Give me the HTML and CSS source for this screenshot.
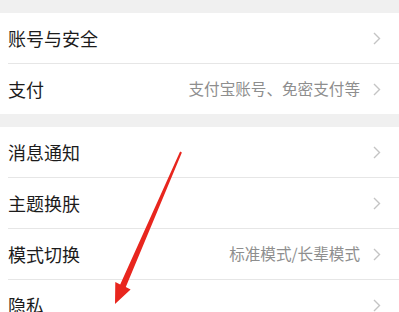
FILE: index.html
```html
<!DOCTYPE html>
<html lang="zh-CN">
<head>
  <meta charset="UTF-8">
  <title>设置</title>
  <link rel="stylesheet" href="styles.css">
</head>
<body>
  <div class="page">
    <div class="gap gap-top"></div>
    <div class="group">
      <div class="row">
        <span class="title">账号与安全</span>
        <span class="chevron"><svg width="8" height="13" viewBox="0 0 8 13"><path d="M1 1l5.5 5.5L1 12" fill="none" stroke="#c4c4c4" stroke-width="1.4"/></svg></span>
      </div>
      <div class="row">
        <span class="title">支付</span>
        <span class="sub">支付宝账号、免密支付等</span>
        <span class="chevron"><svg width="8" height="13" viewBox="0 0 8 13"><path d="M1 1l5.5 5.5L1 12" fill="none" stroke="#c4c4c4" stroke-width="1.4"/></svg></span>
      </div>
    </div>
    <div class="gap"></div>
    <div class="group">
      <div class="row">
        <span class="title">消息通知</span>
        <span class="chevron"><svg width="8" height="13" viewBox="0 0 8 13"><path d="M1 1l5.5 5.5L1 12" fill="none" stroke="#c4c4c4" stroke-width="1.4"/></svg></span>
      </div>
      <div class="row">
        <span class="title">主题换肤</span>
        <span class="chevron"><svg width="8" height="13" viewBox="0 0 8 13"><path d="M1 1l5.5 5.5L1 12" fill="none" stroke="#c4c4c4" stroke-width="1.4"/></svg></span>
      </div>
      <div class="row">
        <span class="title">模式切换</span>
        <span class="sub">标准模式/长辈模式</span>
        <span class="chevron"><svg width="8" height="13" viewBox="0 0 8 13"><path d="M1 1l5.5 5.5L1 12" fill="none" stroke="#c4c4c4" stroke-width="1.4"/></svg></span>
      </div>
      <div class="row">
        <span class="title">隐私</span>
        <span class="chevron"><svg width="8" height="13" viewBox="0 0 8 13"><path d="M1 1l5.5 5.5L1 12" fill="none" stroke="#c4c4c4" stroke-width="1.4"/></svg></span>
      </div>
    </div>

    <!-- red annotation arrow drawn over the list -->
    <svg class="arrow" width="399" height="312" viewBox="0 0 399 312">
      <polygon fill="#e8261e" points="180.1,151.6 181.9,152.4 125.8,286.9 130.6,289.5 115,304 115.3,282.0 120.2,284.5"/>
    </svg>
  </div>
</body>
</html>
```

FILE: styles.css
```css
* {
  box-sizing: border-box;
}

body {
  margin: 0;
  background-color: #f0f0f0;
  font-family: "Noto Sans CJK SC", "Noto Sans", sans-serif;
  color: #1c1c1c;
}

.page {
  position: relative;
  width: 399px;
  height: 312px;
  overflow: hidden;
}

.gap {
  height: 13px;
  background-color: #f0f0f0;
}

.group {
  background-color: #fff;
}

.row {
  position: relative;
  display: flex;
  align-items: center;
  height: 51px;
  padding: 0 18px 1px 8px;
}

.row::after {
  content: "";
  position: absolute;
  left: 8px;
  right: 0;
  bottom: 0;
  height: 1px;
  background-color: #e6e6e6;
}

.row:last-child::after {
  display: none;
}

.row:last-child {
  height: 50px;
  padding-bottom: 0;
}

.title {
  flex: 1;
  font-size: 18px;
  line-height: 1;
}

.sub {
  font-size: 15.6px;
  color: #8e8e8e;
  margin-right: 13px;
  line-height: 1;
}

.chevron {
  display: flex;
  align-items: center;
}

.arrow {
  position: absolute;
  left: 0;
  top: 0;
}
```
